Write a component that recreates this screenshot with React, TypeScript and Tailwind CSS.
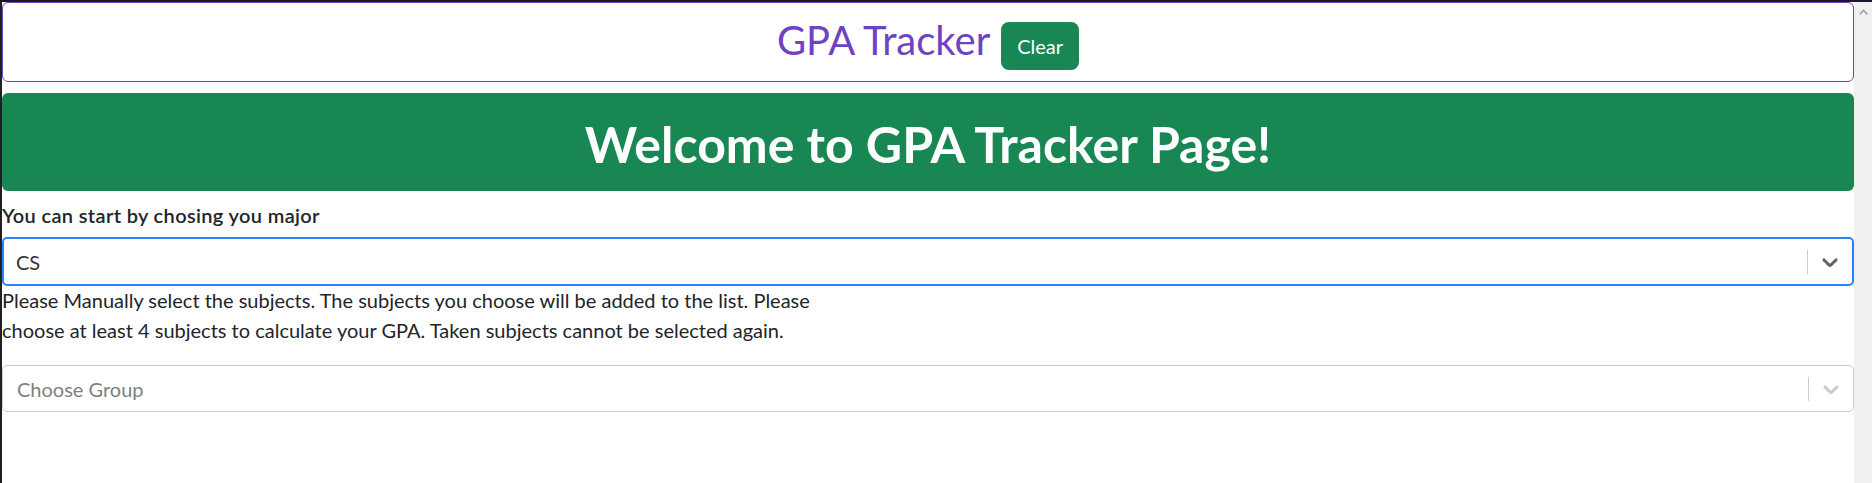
import { useState } from "react";

function Chevron({ color }: { color: string }) {
  return (
    <svg viewBox="0 0 20 20" className="w-[26px] h-[26px]" fill={color} aria-hidden="true">
      <path d="M4.516 7.548c0.436-0.446 1.043-0.481 1.576 0l3.908 3.747 3.908-3.747c0.533-0.481 1.141-0.446 1.574 0 0.436 0.445 0.408 1.197 0 1.615-0.406 0.418-4.695 4.502-4.695 4.502-0.217 0.223-0.502 0.335-0.787 0.335s-0.57-0.112-0.789-0.335c0 0-4.287-4.084-4.695-4.502s-0.436-1.17 0-1.615z" />
    </svg>
  );
}

function SelectBox({ value, placeholder, focused }: { value?: string; placeholder: string; focused?: boolean }) {
  return (
    <div
      className={
        focused
          ? "flex items-center h-[49px] border-2 border-[#2684ff] rounded-[5px] bg-white"
          : "flex items-center h-[47px] border border-[#cccccc] rounded-[5px] bg-white"
      }
    >
      <div className={focused ? "flex-1 pl-[12px] text-[20px] text-[#333333]" : "flex-1 pl-[14px] text-[20px] text-[#808080]"}>
        {value ?? placeholder}
      </div>
      <div className="w-px h-[24px] bg-[#cccccc]" />
      <div className="px-[9px] flex items-center">
        <Chevron color={focused ? "#666666" : "#cccccc"} />
      </div>
    </div>
  );
}

export default function App() {
  const [major] = useState("CS");

  return (
    <div className="h-[483px] overflow-hidden flex flex-col bg-white font-['Lato','Open_Sans',sans-serif] text-[#212529]">
      <div className="h-[2px] bg-[#1e1626]" />
      <div className="flex flex-1">
        <div className="w-[2px] bg-[#202020]" />

        <main className="flex-1">
          <header className="h-[80px] border border-[#6f42c1] rounded-[6px] flex justify-center items-start gap-[11px]">
            <h2 className="mt-[13px] text-[40px] leading-[48px] text-[#6f42c1]">GPA Tracker</h2>
            <button className="mt-[19px] h-[48px] px-[16px] rounded-[8px] bg-[#198754] text-white text-[20px]">
              Clear
            </button>
          </header>

          <div className="mt-[11px] h-[98px] rounded-[6px] bg-[#198754] flex items-center justify-center pt-[4px]">
            <h1 className="text-[50px] leading-[60px] font-bold text-white">Welcome to GPA Tracker Page!</h1>
          </div>

          <label className="block mt-[9px] text-[20px] leading-[30px] font-semibold tracking-[0.35px]">
            You can start by chosing you major
          </label>

          <div className="mt-[7px]">
            <SelectBox value={major} placeholder="Select major" focused />
          </div>

          <p className="w-[830px] -mt-[1px] text-[20px] leading-[30px] mb-[20px]">
            Please Manually select the subjects. The subjects you choose will be added to the list. Please choose at
            least 4 subjects to calculate your GPA. Taken subjects cannot be selected again.
          </p>

          <SelectBox placeholder="Choose Group" />
        </main>

        <div className="w-[18px] bg-[#f0f0f0] flex justify-center pt-[7px]">
          <svg viewBox="0 0 10 6" className="w-[9px] h-[6px]" fill="#a3a3a3">
            <path d="M0 5 L5 0 L10 5 L8.5 6 L5 2.5 L1.5 6 Z" />
          </svg>
        </div>
      </div>
    </div>
  );
}
